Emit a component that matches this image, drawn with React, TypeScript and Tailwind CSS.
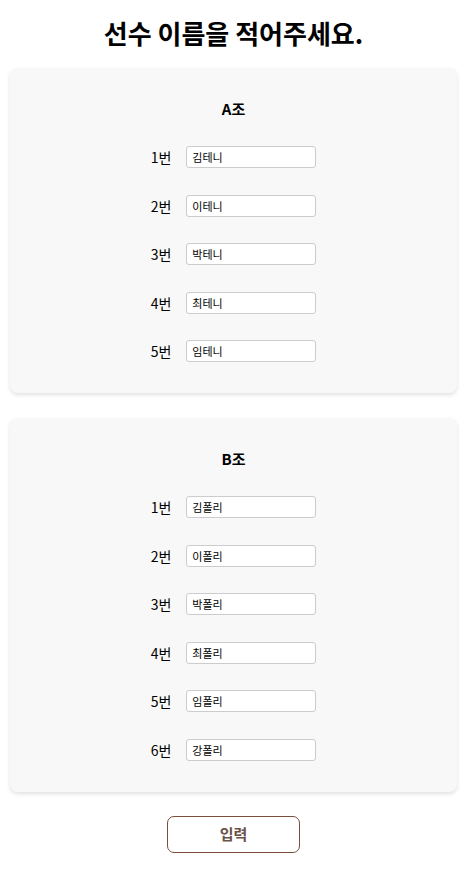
import React from 'react';

const groups = [
  { title: 'A조', players: ['김테니', '이테니', '박테니', '최테니', '임테니'] },
  { title: 'B조', players: ['김폴리', '이폴리', '박폴리', '최폴리', '임폴리', '강폴리'] },
];

const App: React.FC = () => {
  return (
    <div className="min-h-screen bg-white font-['Noto_Sans_CJK_KR','Noto_Sans',sans-serif] text-black">
      <h1 className="pt-[15px] text-center text-[26px] font-bold leading-[36px]">선수 이름을 적어주세요.</h1>

      <div className="mt-[17px] flex flex-col gap-[25px] px-[10px]">
        {groups.map((g) => (
          <div
            key={g.title}
            className="rounded-[8px] bg-[#f8f8f8] pt-[30px] pb-[31px] shadow-[0_2px_4px_rgba(0,0,0,0.12)]"
          >
            <h2 className="text-center text-[15px] font-bold leading-[22px]">{g.title}</h2>
            <div className="mt-[26px] flex flex-col gap-[26.5px]">
              {g.players.map((p, i) => (
                <div key={p} className="flex items-center justify-center gap-[15px]">
                  <span className="text-[14px] leading-[22px]">{i + 1}번</span>
                  <input
                    defaultValue={p}
                    className="h-[22px] w-[130px] rounded-[3px] border border-[#cccccc] bg-white px-[5px] text-[11px] text-black outline-none"
                  />
                </div>
              ))}
            </div>
          </div>
        ))}
      </div>

      <div className="mt-[24px] flex justify-center">
        <button className="h-[37px] w-[133px] rounded-[7px] border border-[#7a4e3e] bg-white text-[15px] font-bold text-[#6a5248]">
          입력
        </button>
      </div>
    </div>
  );
};

export default App;
